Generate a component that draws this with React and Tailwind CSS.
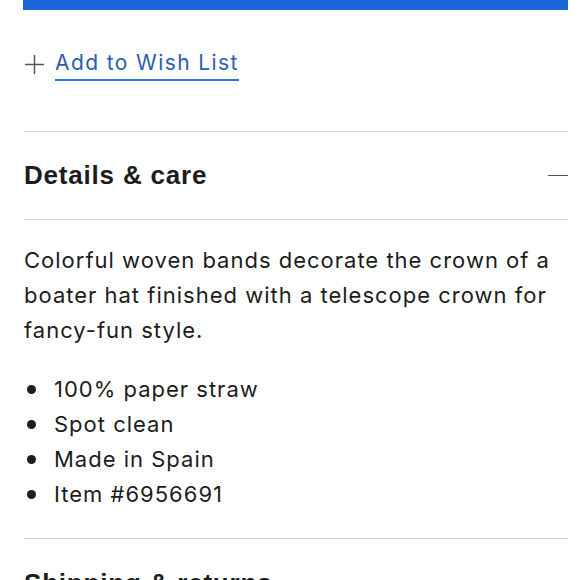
export default function App() {
  const body = { fontFamily: 'Inter, "Liberation Sans", sans-serif' };
  const head = { fontFamily: '"Liberation Sans", Arial, sans-serif' };
  return (
    <div className="w-[580px] h-[580px] overflow-hidden bg-white pl-[24px] pr-[12px] text-[#1c1c1c]">
      <div className="h-[10px] -ml-px bg-[#1b66d8]" />
      <div className="mt-[38px] flex items-center gap-[10px]" style={body}>
        <svg width="21" height="21" viewBox="0 0 21 21" className="shrink-0">
          <path d="M10.5 1v19M1 10.5h19" stroke="#555" strokeWidth="1.5" fill="none" />
        </svg>
        <span className="text-[21px] tracking-[1.4px] leading-[30px] text-[#2a5eab] border-b-2 border-[#2f74d0] pb-[1px]">
          Add to Wish List
        </span>
      </div>
      <div className="mt-[50px] border-t border-[#d2d2d2] h-[89px] flex items-center justify-between border-b">
        <h2 className="text-[26px] font-bold tracking-[0.8px]" style={head}>Details &amp; care</h2>
        <div className="w-[20px] h-[1.5px] bg-[#555]" />
      </div>
      <div className="pt-[23px] pb-[26px] text-[22px] tracking-[1px] leading-[35px]" style={body}>
        <p>Colorful woven bands decorate the crown of a boater hat finished with a telescope crown for fancy-fun style.</p>
        <ul className="mt-[24px]">
          {["100% paper straw", "Spot clean", "Made in Spain", "Item #6956691"].map((t) => (
            <li key={t} className="flex items-center">
              <span className="w-[9px] h-[9px] rounded-full bg-[#1c1c1c] ml-[3px] mr-[18px]" />
              {t}
            </li>
          ))}
        </ul>
      </div>
      <div className="border-t border-[#d2d2d2] h-[89px] flex items-center justify-between">
        <h2 className="text-[26px] font-bold tracking-[0.8px]" style={head}>Shipping &amp; returns</h2>
        <div className="w-[20px] h-[1.5px] bg-[#555]" />
      </div>
    </div>
  );
}
